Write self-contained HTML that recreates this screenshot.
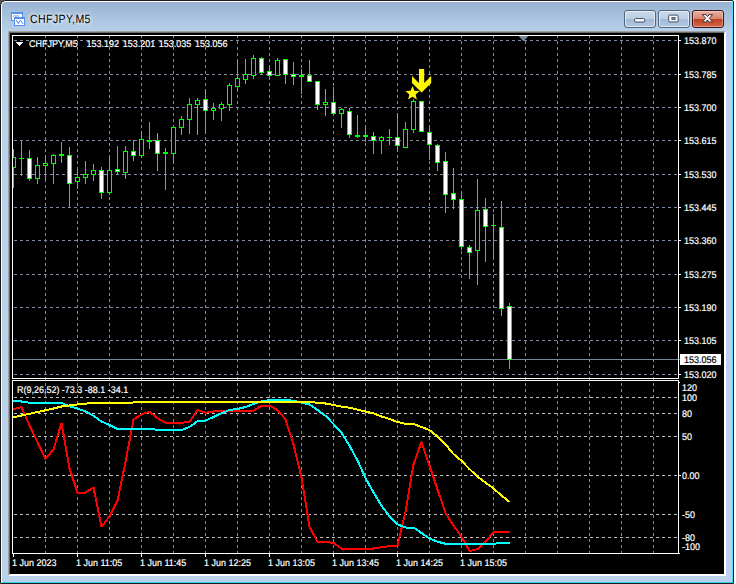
<!DOCTYPE html>
<html><head><meta charset="utf-8"><title>CHFJPY,M5</title>
<style>
html,body{margin:0;padding:0;background:#fff;}
body{width:736px;height:584px;position:relative;overflow:hidden;font-family:"Liberation Sans",sans-serif;}
#win{position:absolute;left:0;top:0;width:734px;height:584px;box-sizing:border-box;border:1px solid #1c1c1c;border-radius:6px 2px 0 0;background:#b9d1ea;overflow:hidden;}
#corner{position:absolute;left:0;top:0;width:8px;height:8px;background:#555;}
#hl{position:absolute;left:0;top:0;width:732px;height:582px;box-sizing:border-box;border-top:1px solid #fff;border-left:1px solid #fff;border-right:1px solid #5ad8ff;border-bottom:1px solid #35d0f0;border-radius:5px 1px 0 0;background:linear-gradient(#98b4d2 0px,#b9d1ea 30px,#b9d1ea 100%);}
#client{position:absolute;left:8px;top:31px;width:718px;height:545px;box-sizing:border-box;border:1px solid;border-color:#a0a0a0 #fff #fff #a0a0a0;background:#000;}
#client i{position:absolute;left:0;top:0;right:0;bottom:0;border:1px solid;border-color:#696969 #fff #fff #696969;}
#title{position:absolute;left:29.5px;top:10.8px;font-size:12px;line-height:16px;color:#000;letter-spacing:0.45px;transform:scaleX(.88);transform-origin:0 0;text-rendering:geometricPrecision;text-shadow:0 0 4px #fff,0 0 6px #fff;}
svg{position:absolute;left:0;top:0;}
.t{position:absolute;font-size:9.6px;line-height:11px;white-space:nowrap;text-rendering:geometricPrecision;-webkit-text-stroke:0.2px currentColor;transform:scaleX(.935);transform-origin:0 0;}
.btn{position:absolute;top:10px;height:18px;width:32px;box-sizing:border-box;border:1px solid #52657f;border-radius:3px;box-shadow:inset 0 0 0 1px rgba(255,255,255,.6);background:linear-gradient(#c9d9ea 0,#bccfe4 48%,#a3bbd6 52%,#b2c8e0 100%);}
#bclose{border-color:#43141a;background:linear-gradient(#e9b0a2 0,#d98571 48%,#c13f21 52%,#d4694b 100%);box-shadow:inset 0 0 0 1px rgba(255,255,255,.35);}
</style></head><body>
<div id="corner"></div>
<div id="win"><div id="hl"></div></div>
<svg width="20" height="20" style="left:8px;top:9px" viewBox="8 9 20 20" shape-rendering="crispEdges">
<rect x="11" y="12" width="12" height="9" fill="#5890f0"/><rect x="12" y="14" width="10" height="6" fill="#fff"/>
<polyline points="13,16.5 14.5,15.5 16,16.5 17.5,15.5 19,16.5" fill="none" stroke="#5890f0" stroke-width="1" shape-rendering="auto"/>
<rect x="14" y="17" width="11" height="9" fill="#5890f0"/><rect x="15" y="19" width="9" height="6" fill="#fff"/>
<polyline points="16.2,20 18.3,23.6 20,20.4 21.4,21.2 23,24" fill="none" stroke="#4a86ff" stroke-width="1" shape-rendering="auto"/>
</svg>
<div id="title">CHFJPY,M5</div>
<div class="btn" style="left:624px"><svg width="30" height="16" viewBox="0 0 30 16"><rect x="9.6" y="7.6" width="10" height="3.4" rx="1" fill="#fff" stroke="#3d4a5c"/></svg></div>
<div class="btn" style="left:658px"><svg width="30" height="16" viewBox="0 0 30 16"><rect x="9.7" y="4.1" width="9.4" height="6.8" rx="1" fill="#fff" stroke="#3d4a5c"/><rect x="12.9" y="6.6" width="3.2" height="1.9" fill="#8ea3bd" stroke="#3d4a5c" stroke-width=".9"/></svg></div>
<div class="btn" id="bclose" style="left:692px"><svg width="30" height="16" viewBox="0 0 30 16"><path d="M9.4 3.6 L12.8 3.6 L14.5 5.6 L16.2 3.6 L19.6 3.6 L16.3 7.3 L19.6 11 L16.2 11 L14.5 9 L12.8 11 L9.4 11 L12.7 7.3 Z" fill="#fff" stroke="#3f3038" stroke-width="1" stroke-linejoin="round"/></svg></div>
<div id="client"><i></i></div>
<svg width="736" height="584" viewBox="0 0 736 584" shape-rendering="crispEdges">
<line x1="45.5" y1="36" x2="45.5" y2="553" stroke="#7e8ea0" stroke-dasharray="3 3" stroke-dashoffset="1"/>
<line x1="77.5" y1="36" x2="77.5" y2="553" stroke="#7e8ea0" stroke-dasharray="3 3" stroke-dashoffset="1"/>
<line x1="109.5" y1="36" x2="109.5" y2="553" stroke="#7e8ea0" stroke-dasharray="3 3" stroke-dashoffset="1"/>
<line x1="141.5" y1="36" x2="141.5" y2="553" stroke="#7e8ea0" stroke-dasharray="3 3" stroke-dashoffset="1"/>
<line x1="173.5" y1="36" x2="173.5" y2="553" stroke="#7e8ea0" stroke-dasharray="3 3" stroke-dashoffset="1"/>
<line x1="205.5" y1="36" x2="205.5" y2="553" stroke="#7e8ea0" stroke-dasharray="3 3" stroke-dashoffset="1"/>
<line x1="237.5" y1="36" x2="237.5" y2="553" stroke="#7e8ea0" stroke-dasharray="3 3" stroke-dashoffset="1"/>
<line x1="269.5" y1="36" x2="269.5" y2="553" stroke="#7e8ea0" stroke-dasharray="3 3" stroke-dashoffset="1"/>
<line x1="301.5" y1="36" x2="301.5" y2="553" stroke="#7e8ea0" stroke-dasharray="3 3" stroke-dashoffset="1"/>
<line x1="333.5" y1="36" x2="333.5" y2="553" stroke="#7e8ea0" stroke-dasharray="3 3" stroke-dashoffset="1"/>
<line x1="365.5" y1="36" x2="365.5" y2="553" stroke="#7e8ea0" stroke-dasharray="3 3" stroke-dashoffset="1"/>
<line x1="397.5" y1="36" x2="397.5" y2="553" stroke="#7e8ea0" stroke-dasharray="3 3" stroke-dashoffset="1"/>
<line x1="429.5" y1="36" x2="429.5" y2="553" stroke="#7e8ea0" stroke-dasharray="3 3" stroke-dashoffset="1"/>
<line x1="461.5" y1="36" x2="461.5" y2="553" stroke="#7e8ea0" stroke-dasharray="3 3" stroke-dashoffset="1"/>
<line x1="493.5" y1="36" x2="493.5" y2="553" stroke="#7e8ea0" stroke-dasharray="3 3" stroke-dashoffset="1"/>
<line x1="525.5" y1="36" x2="525.5" y2="553" stroke="#7e8ea0" stroke-dasharray="3 3" stroke-dashoffset="1"/>
<line x1="557.5" y1="36" x2="557.5" y2="553" stroke="#7e8ea0" stroke-dasharray="3 3" stroke-dashoffset="1"/>
<line x1="589.5" y1="36" x2="589.5" y2="553" stroke="#7e8ea0" stroke-dasharray="3 3" stroke-dashoffset="1"/>
<line x1="621.5" y1="36" x2="621.5" y2="553" stroke="#7e8ea0" stroke-dasharray="3 3" stroke-dashoffset="1"/>
<line x1="653.5" y1="36" x2="653.5" y2="553" stroke="#7e8ea0" stroke-dasharray="3 3" stroke-dashoffset="1"/>
<line x1="13" y1="40.5" x2="678" y2="40.5" stroke="#7e8ea0" stroke-dasharray="3 3" stroke-dashoffset="5"/>
<line x1="13" y1="74.5" x2="678" y2="74.5" stroke="#7e8ea0" stroke-dasharray="3 3" stroke-dashoffset="5"/>
<line x1="13" y1="107.5" x2="678" y2="107.5" stroke="#7e8ea0" stroke-dasharray="3 3" stroke-dashoffset="5"/>
<line x1="13" y1="140.5" x2="678" y2="140.5" stroke="#7e8ea0" stroke-dasharray="3 3" stroke-dashoffset="5"/>
<line x1="13" y1="174.5" x2="678" y2="174.5" stroke="#7e8ea0" stroke-dasharray="3 3" stroke-dashoffset="5"/>
<line x1="13" y1="207.5" x2="678" y2="207.5" stroke="#7e8ea0" stroke-dasharray="3 3" stroke-dashoffset="5"/>
<line x1="13" y1="240.5" x2="678" y2="240.5" stroke="#7e8ea0" stroke-dasharray="3 3" stroke-dashoffset="5"/>
<line x1="13" y1="274.5" x2="678" y2="274.5" stroke="#7e8ea0" stroke-dasharray="3 3" stroke-dashoffset="5"/>
<line x1="13" y1="307.5" x2="678" y2="307.5" stroke="#7e8ea0" stroke-dasharray="3 3" stroke-dashoffset="5"/>
<line x1="13" y1="340.5" x2="678" y2="340.5" stroke="#7e8ea0" stroke-dasharray="3 3" stroke-dashoffset="5"/>
<line x1="13" y1="374.5" x2="678" y2="374.5" stroke="#7e8ea0" stroke-dasharray="3 3" stroke-dashoffset="5"/>
<line x1="13" y1="397.5" x2="678" y2="397.5" stroke="#c0c0c0" stroke-dasharray="3 3" stroke-dashoffset="5"/>
<line x1="13" y1="413.5" x2="678" y2="413.5" stroke="#c0c0c0" stroke-dasharray="3 3" stroke-dashoffset="5"/>
<line x1="13" y1="436.5" x2="678" y2="436.5" stroke="#c0c0c0" stroke-dasharray="3 3" stroke-dashoffset="5"/>
<line x1="13" y1="475.5" x2="678" y2="475.5" stroke="#c0c0c0" stroke-dasharray="3 3" stroke-dashoffset="5"/>
<line x1="13" y1="514.5" x2="678" y2="514.5" stroke="#c0c0c0" stroke-dasharray="3 3" stroke-dashoffset="5"/>
<line x1="13" y1="537.5" x2="678" y2="537.5" stroke="#c0c0c0" stroke-dasharray="3 3" stroke-dashoffset="5"/>
<rect x="13" y="359" width="667" height="1" fill="#778899"/>
<rect x="13" y="149" width="1" height="39" fill="#00ff00"/>
<rect x="12" y="157" width="4" height="11" fill="#00ff00"/>
<rect x="13" y="158" width="2" height="9" fill="#000"/>
<rect x="21" y="141" width="1" height="35" fill="#00ff00"/>
<rect x="19" y="158" width="5" height="1" fill="#00ff00"/>
<rect x="29" y="150" width="1" height="31" fill="#00ff00"/>
<rect x="27" y="158" width="5" height="21" fill="#00ff00"/>
<rect x="28" y="159" width="3" height="19" fill="#fff"/>
<rect x="37" y="157" width="1" height="27" fill="#00ff00"/>
<rect x="35" y="165" width="5" height="14" fill="#00ff00"/>
<rect x="36" y="166" width="3" height="12" fill="#000"/>
<rect x="45" y="155" width="1" height="25" fill="#00ff00"/>
<rect x="43" y="163" width="5" height="3" fill="#00ff00"/>
<rect x="44" y="164" width="3" height="1" fill="#000"/>
<rect x="53" y="154" width="1" height="30" fill="#00ff00"/>
<rect x="51" y="155" width="5" height="9" fill="#00ff00"/>
<rect x="52" y="156" width="3" height="7" fill="#000"/>
<rect x="61" y="142" width="1" height="21" fill="#00ff00"/>
<rect x="59" y="154" width="5" height="2" fill="#00ff00"/>
<rect x="69" y="147" width="1" height="60" fill="#00ff00"/>
<rect x="67" y="155" width="5" height="29" fill="#00ff00"/>
<rect x="68" y="156" width="3" height="27" fill="#fff"/>
<rect x="77" y="167" width="1" height="22" fill="#00ff00"/>
<rect x="75" y="177" width="5" height="5" fill="#00ff00"/>
<rect x="76" y="178" width="3" height="3" fill="#000"/>
<rect x="85" y="161" width="1" height="23" fill="#00ff00"/>
<rect x="83" y="174" width="5" height="4" fill="#00ff00"/>
<rect x="84" y="175" width="3" height="2" fill="#000"/>
<rect x="93" y="164" width="1" height="17" fill="#00ff00"/>
<rect x="91" y="170" width="5" height="5" fill="#00ff00"/>
<rect x="92" y="171" width="3" height="3" fill="#000"/>
<rect x="101" y="167" width="1" height="32" fill="#00ff00"/>
<rect x="99" y="170" width="5" height="23" fill="#00ff00"/>
<rect x="100" y="171" width="3" height="21" fill="#fff"/>
<rect x="109" y="157" width="1" height="38" fill="#00ff00"/>
<rect x="107" y="170" width="5" height="23" fill="#00ff00"/>
<rect x="108" y="171" width="3" height="21" fill="#000"/>
<rect x="117" y="146" width="1" height="29" fill="#00ff00"/>
<rect x="115" y="169" width="5" height="3" fill="#00ff00"/>
<rect x="116" y="170" width="3" height="1" fill="#fff"/>
<rect x="125" y="146" width="1" height="33" fill="#00ff00"/>
<rect x="123" y="151" width="5" height="22" fill="#00ff00"/>
<rect x="124" y="152" width="3" height="20" fill="#000"/>
<rect x="133" y="140" width="1" height="21" fill="#00ff00"/>
<rect x="131" y="151" width="5" height="5" fill="#00ff00"/>
<rect x="132" y="152" width="3" height="3" fill="#fff"/>
<rect x="141" y="131" width="1" height="27" fill="#00ff00"/>
<rect x="139" y="139" width="5" height="17" fill="#00ff00"/>
<rect x="140" y="140" width="3" height="15" fill="#000"/>
<rect x="149" y="122" width="1" height="27" fill="#00ff00"/>
<rect x="147" y="140" width="5" height="2" fill="#00ff00"/>
<rect x="157" y="133" width="1" height="38" fill="#00ff00"/>
<rect x="155" y="140" width="5" height="14" fill="#00ff00"/>
<rect x="156" y="141" width="3" height="12" fill="#fff"/>
<rect x="165" y="148" width="1" height="42" fill="#00ff00"/>
<rect x="163" y="152" width="5" height="2" fill="#00ff00"/>
<rect x="173" y="127" width="1" height="37" fill="#00ff00"/>
<rect x="171" y="127" width="5" height="27" fill="#00ff00"/>
<rect x="172" y="128" width="3" height="25" fill="#000"/>
<rect x="181" y="116" width="1" height="19" fill="#00ff00"/>
<rect x="179" y="119" width="5" height="9" fill="#00ff00"/>
<rect x="180" y="120" width="3" height="7" fill="#000"/>
<rect x="189" y="98" width="1" height="36" fill="#00ff00"/>
<rect x="187" y="104" width="5" height="16" fill="#00ff00"/>
<rect x="188" y="105" width="3" height="14" fill="#000"/>
<rect x="197" y="98" width="1" height="37" fill="#00ff00"/>
<rect x="195" y="100" width="5" height="5" fill="#00ff00"/>
<rect x="196" y="101" width="3" height="3" fill="#000"/>
<rect x="205" y="89" width="1" height="45" fill="#00ff00"/>
<rect x="203" y="99" width="5" height="12" fill="#00ff00"/>
<rect x="204" y="100" width="3" height="10" fill="#fff"/>
<rect x="213" y="103" width="1" height="17" fill="#00ff00"/>
<rect x="211" y="108" width="5" height="3" fill="#00ff00"/>
<rect x="212" y="109" width="3" height="1" fill="#000"/>
<rect x="221" y="102" width="1" height="19" fill="#00ff00"/>
<rect x="219" y="104" width="5" height="5" fill="#00ff00"/>
<rect x="220" y="105" width="3" height="3" fill="#000"/>
<rect x="229" y="83" width="1" height="28" fill="#00ff00"/>
<rect x="227" y="85" width="5" height="20" fill="#00ff00"/>
<rect x="228" y="86" width="3" height="18" fill="#000"/>
<rect x="237" y="60" width="1" height="30" fill="#00ff00"/>
<rect x="235" y="78" width="5" height="9" fill="#00ff00"/>
<rect x="236" y="79" width="3" height="7" fill="#000"/>
<rect x="245" y="59" width="1" height="25" fill="#00ff00"/>
<rect x="243" y="74" width="5" height="6" fill="#00ff00"/>
<rect x="244" y="75" width="3" height="4" fill="#000"/>
<rect x="253" y="55" width="1" height="24" fill="#00ff00"/>
<rect x="251" y="58" width="5" height="18" fill="#00ff00"/>
<rect x="252" y="59" width="3" height="16" fill="#000"/>
<rect x="261" y="57" width="1" height="17" fill="#00ff00"/>
<rect x="259" y="58" width="5" height="15" fill="#00ff00"/>
<rect x="260" y="59" width="3" height="13" fill="#fff"/>
<rect x="269" y="65" width="1" height="15" fill="#00ff00"/>
<rect x="267" y="71" width="5" height="5" fill="#00ff00"/>
<rect x="268" y="72" width="3" height="3" fill="#fff"/>
<rect x="277" y="58" width="1" height="18" fill="#00ff00"/>
<rect x="275" y="60" width="5" height="16" fill="#00ff00"/>
<rect x="276" y="61" width="3" height="14" fill="#000"/>
<rect x="285" y="59" width="1" height="25" fill="#00ff00"/>
<rect x="283" y="59" width="5" height="16" fill="#00ff00"/>
<rect x="284" y="60" width="3" height="14" fill="#fff"/>
<rect x="293" y="62" width="1" height="23" fill="#00ff00"/>
<rect x="291" y="74" width="5" height="3" fill="#00ff00"/>
<rect x="292" y="75" width="3" height="1" fill="#fff"/>
<rect x="301" y="69" width="1" height="25" fill="#00ff00"/>
<rect x="299" y="75" width="5" height="2" fill="#00ff00"/>
<rect x="309" y="60" width="1" height="22" fill="#00ff00"/>
<rect x="307" y="75" width="5" height="7" fill="#00ff00"/>
<rect x="308" y="76" width="3" height="5" fill="#fff"/>
<rect x="317" y="81" width="1" height="29" fill="#00ff00"/>
<rect x="315" y="81" width="5" height="24" fill="#00ff00"/>
<rect x="316" y="82" width="3" height="22" fill="#fff"/>
<rect x="325" y="89" width="1" height="27" fill="#00ff00"/>
<rect x="323" y="102" width="5" height="3" fill="#00ff00"/>
<rect x="324" y="103" width="3" height="1" fill="#000"/>
<rect x="333" y="87" width="1" height="28" fill="#00ff00"/>
<rect x="331" y="102" width="5" height="12" fill="#00ff00"/>
<rect x="332" y="103" width="3" height="10" fill="#fff"/>
<rect x="341" y="108" width="1" height="20" fill="#00ff00"/>
<rect x="339" y="109" width="5" height="5" fill="#00ff00"/>
<rect x="340" y="110" width="3" height="3" fill="#000"/>
<rect x="349" y="108" width="1" height="30" fill="#00ff00"/>
<rect x="347" y="111" width="5" height="24" fill="#00ff00"/>
<rect x="348" y="112" width="3" height="22" fill="#fff"/>
<rect x="357" y="115" width="1" height="23" fill="#00ff00"/>
<rect x="355" y="135" width="5" height="2" fill="#00ff00"/>
<rect x="365" y="125" width="1" height="17" fill="#00ff00"/>
<rect x="363" y="135" width="5" height="2" fill="#00ff00"/>
<rect x="373" y="132" width="1" height="22" fill="#00ff00"/>
<rect x="371" y="136" width="5" height="5" fill="#00ff00"/>
<rect x="372" y="137" width="3" height="3" fill="#fff"/>
<rect x="381" y="136" width="1" height="18" fill="#00ff00"/>
<rect x="379" y="137" width="5" height="4" fill="#00ff00"/>
<rect x="380" y="138" width="3" height="2" fill="#000"/>
<rect x="389" y="129" width="1" height="16" fill="#00ff00"/>
<rect x="387" y="137" width="5" height="1" fill="#00ff00"/>
<rect x="397" y="113" width="1" height="37" fill="#00ff00"/>
<rect x="395" y="137" width="5" height="9" fill="#00ff00"/>
<rect x="396" y="138" width="3" height="7" fill="#fff"/>
<rect x="405" y="122" width="1" height="26" fill="#00ff00"/>
<rect x="403" y="129" width="5" height="19" fill="#00ff00"/>
<rect x="404" y="130" width="3" height="17" fill="#000"/>
<rect x="413" y="99" width="1" height="34" fill="#00ff00"/>
<rect x="411" y="101" width="5" height="29" fill="#00ff00"/>
<rect x="412" y="102" width="3" height="27" fill="#000"/>
<rect x="421" y="101" width="1" height="31" fill="#00ff00"/>
<rect x="419" y="101" width="5" height="31" fill="#00ff00"/>
<rect x="420" y="102" width="3" height="29" fill="#fff"/>
<rect x="429" y="125" width="1" height="35" fill="#00ff00"/>
<rect x="427" y="132" width="5" height="13" fill="#00ff00"/>
<rect x="428" y="133" width="3" height="11" fill="#fff"/>
<rect x="437" y="144" width="1" height="27" fill="#00ff00"/>
<rect x="435" y="145" width="5" height="18" fill="#00ff00"/>
<rect x="436" y="146" width="3" height="16" fill="#fff"/>
<rect x="445" y="152" width="1" height="61" fill="#00ff00"/>
<rect x="443" y="161" width="5" height="34" fill="#00ff00"/>
<rect x="444" y="162" width="3" height="32" fill="#fff"/>
<rect x="453" y="168" width="1" height="41" fill="#00ff00"/>
<rect x="451" y="193" width="5" height="7" fill="#00ff00"/>
<rect x="452" y="194" width="3" height="5" fill="#fff"/>
<rect x="461" y="194" width="1" height="56" fill="#00ff00"/>
<rect x="459" y="199" width="5" height="48" fill="#00ff00"/>
<rect x="460" y="200" width="3" height="46" fill="#fff"/>
<rect x="469" y="245" width="1" height="34" fill="#00ff00"/>
<rect x="467" y="247" width="5" height="6" fill="#00ff00"/>
<rect x="468" y="248" width="3" height="4" fill="#fff"/>
<rect x="477" y="179" width="1" height="106" fill="#00ff00"/>
<rect x="475" y="210" width="5" height="41" fill="#00ff00"/>
<rect x="476" y="211" width="3" height="39" fill="#000"/>
<rect x="485" y="198" width="1" height="64" fill="#00ff00"/>
<rect x="483" y="209" width="5" height="18" fill="#00ff00"/>
<rect x="484" y="210" width="3" height="16" fill="#fff"/>
<rect x="493" y="214" width="1" height="43" fill="#00ff00"/>
<rect x="491" y="225" width="5" height="1" fill="#00ff00"/>
<rect x="501" y="201" width="1" height="115" fill="#00ff00"/>
<rect x="499" y="227" width="5" height="82" fill="#00ff00"/>
<rect x="500" y="228" width="3" height="80" fill="#fff"/>
<rect x="509" y="303" width="1" height="66" fill="#00ff00"/>
<rect x="507" y="306" width="5" height="54" fill="#00ff00"/>
<rect x="508" y="307" width="3" height="52" fill="#fff"/>
<polyline points="12.6,409.00 13.5,409.00 21.5,407.20 29.5,425.30 37.5,442.20 45.5,459.00 53.5,449.50 61.5,423.00 69.5,468.50 77.5,492.50 85.5,492.50 93.5,487.50 101.5,526.75 109.5,516.50 117.5,500.50 125.5,462.00 133.5,419.50 141.5,414.50 149.5,411.50 157.5,418.30 165.5,422.75 173.5,423.00 181.5,422.75 189.5,422.00 197.5,410.00 205.5,412.75 213.5,411.50 221.5,410.75 229.5,410.75 237.5,410.75 245.5,410.75 253.5,410.75 261.5,405.75 269.5,405.75 277.5,410.00 285.5,419.50 293.5,444.40 301.5,477.50 309.5,526.75 317.5,541.75 325.5,541.75 333.5,543.00 341.5,548.50 349.5,548.50 357.5,548.50 365.5,548.50 373.5,548.50 381.5,547.25 389.5,546.25 397.5,545.50 405.5,511.75 413.5,464.40 421.5,441.80 429.5,465.60 437.5,489.40 445.5,513.00 453.5,525.50 461.5,536.75 469.5,551.00 477.5,549.25 485.5,541.75 493.5,532.25 501.5,531.75 509.5,531.75" fill="none" stroke="#ff0000" stroke-width="2" stroke-linejoin="bevel"/>
<polyline points="12.6,401.00 13.5,401.00 21.5,401.50 29.5,402.75 37.5,403.00 45.5,403.00 53.5,403.00 61.5,403.00 69.5,406.25 77.5,408.50 85.5,411.50 93.5,415.75 101.5,421.50 109.5,425.00 117.5,429.00 125.5,429.00 133.5,429.00 141.5,429.00 149.5,429.00 157.5,429.70 165.5,430.00 173.5,430.00 181.5,430.00 189.5,427.00 197.5,421.25 205.5,420.75 213.5,417.00 221.5,413.25 229.5,410.00 237.5,409.00 245.5,407.00 253.5,404.00 261.5,401.50 269.5,400.00 277.5,400.00 285.5,400.00 293.5,400.75 301.5,402.50 309.5,404.50 317.5,410.00 325.5,415.75 333.5,424.00 341.5,432.75 349.5,445.60 357.5,460.50 365.5,478.00 373.5,492.50 381.5,505.50 389.5,516.50 397.5,524.25 405.5,527.50 413.5,527.50 421.5,533.00 429.5,538.50 437.5,541.75 445.5,543.75 453.5,543.75 461.5,543.75 469.5,543.75 477.5,543.75 485.5,543.75 493.5,543.75 501.5,543.00 509.5,543.00" fill="none" stroke="#00ffff" stroke-width="2" stroke-linejoin="bevel"/>
<polyline points="12.6,417.20 13.5,417.20 21.5,415.50 29.5,413.80 37.5,412.00 45.5,410.30 53.5,408.50 61.5,406.50 69.5,405.50 77.5,404.50 85.5,403.60 93.5,403.00 101.5,403.00 109.5,403.00 117.5,403.00 125.5,403.00 133.5,402.50 141.5,402.00 149.5,402.00 157.5,402.00 165.5,402.00 173.5,402.00 181.5,402.00 189.5,402.00 197.5,402.00 205.5,402.00 213.5,402.00 221.5,402.00 229.5,402.00 237.5,402.00 245.5,402.00 253.5,402.00 261.5,402.00 269.5,402.00 277.5,402.00 285.5,402.00 293.5,402.00 301.5,402.00 309.5,402.00 317.5,402.70 325.5,403.50 333.5,405.00 341.5,406.60 349.5,407.75 357.5,409.60 365.5,411.50 373.5,413.25 381.5,416.50 389.5,419.00 397.5,422.00 405.5,423.75 413.5,424.00 421.5,427.00 429.5,430.00 437.5,436.50 445.5,444.40 453.5,454.10 461.5,460.75 469.5,469.10 477.5,476.50 485.5,482.75 493.5,488.40 501.5,495.60 509.5,501.80" fill="none" stroke="#ffff00" stroke-width="2" stroke-linejoin="bevel"/>
<rect x="12" y="35" width="667" height="1" fill="#fff"/>
<rect x="12" y="378" width="667" height="1" fill="#fff"/>
<rect x="12" y="35" width="1" height="344" fill="#fff"/>
<rect x="678" y="35" width="1" height="344" fill="#fff"/>
<rect x="12" y="380" width="667" height="1" fill="#fff"/>
<rect x="12" y="553" width="667" height="1" fill="#fff"/>
<rect x="12" y="380" width="1" height="174" fill="#fff"/>
<rect x="678" y="380" width="1" height="174" fill="#fff"/>
<rect x="679" y="40" width="2" height="1" fill="#fff"/>
<rect x="679" y="74" width="2" height="1" fill="#fff"/>
<rect x="679" y="107" width="2" height="1" fill="#fff"/>
<rect x="679" y="140" width="2" height="1" fill="#fff"/>
<rect x="679" y="174" width="2" height="1" fill="#fff"/>
<rect x="679" y="207" width="2" height="1" fill="#fff"/>
<rect x="679" y="240" width="2" height="1" fill="#fff"/>
<rect x="679" y="274" width="2" height="1" fill="#fff"/>
<rect x="679" y="307" width="2" height="1" fill="#fff"/>
<rect x="679" y="340" width="2" height="1" fill="#fff"/>
<rect x="679" y="374" width="2" height="1" fill="#fff"/>
<rect x="679" y="382" width="1" height="1" fill="#fff"/>
<rect x="679" y="553" width="1" height="1" fill="#fff"/>
<rect x="679" y="475" width="2" height="1" fill="#fff"/>
<rect x="13" y="554" width="1" height="3" fill="#fff"/>
<rect x="77" y="554" width="1" height="3" fill="#fff"/>
<rect x="141" y="554" width="1" height="3" fill="#fff"/>
<rect x="205" y="554" width="1" height="3" fill="#fff"/>
<rect x="269" y="554" width="1" height="3" fill="#fff"/>
<rect x="333" y="554" width="1" height="3" fill="#fff"/>
<rect x="397" y="554" width="1" height="3" fill="#fff"/>
<rect x="461" y="554" width="1" height="3" fill="#fff"/>
<polygon points="518.6,36 528.4,36 523.5,41.2" fill="#778899" shape-rendering="geometricPrecision"/>
<polygon points="15.5,42 23,42 19.25,46" fill="#fff"/>
<polygon shape-rendering="geometricPrecision" points="419,69 424.2,69 424.2,83 431.2,76 431.2,83 421.6,92.6 412,83 412,76 419,83" fill="#fff800"/>
<polygon shape-rendering="geometricPrecision" points="412.50,85.90 414.44,90.73 419.63,91.08 415.64,94.42 416.91,99.47 412.50,96.70 408.09,99.47 409.36,94.42 405.37,91.08 410.56,90.73" fill="#fff800"/>
<rect x="680" y="354" width="41" height="11" fill="#fff"/>
</svg>
<div class="t" style="left:684.1px;top:36px;color:#fff;">153.870</div><div class="t" style="left:684.1px;top:70px;color:#fff;">153.785</div><div class="t" style="left:684.1px;top:103px;color:#fff;">153.700</div><div class="t" style="left:684.1px;top:136px;color:#fff;">153.615</div><div class="t" style="left:684.1px;top:170px;color:#fff;">153.530</div><div class="t" style="left:684.1px;top:203px;color:#fff;">153.445</div><div class="t" style="left:684.1px;top:236px;color:#fff;">153.360</div><div class="t" style="left:684.1px;top:270px;color:#fff;">153.275</div><div class="t" style="left:684.1px;top:303px;color:#fff;">153.190</div><div class="t" style="left:684.1px;top:336px;color:#fff;">153.105</div><div class="t" style="left:684.1px;top:370px;color:#fff;">153.020</div><div class="t" style="left:684.1px;top:355px;color:#000;">153.056</div><div class="t" style="left:682.3000000000001px;top:383px;color:#fff;">120</div><div class="t" style="left:681.7px;top:393px;color:#fff;">100</div><div class="t" style="left:681.7px;top:409px;color:#fff;">80</div><div class="t" style="left:681.7px;top:432px;color:#fff;">50</div><div class="t" style="left:681.7px;top:471px;color:#fff;">0.00</div><div class="t" style="left:681.7px;top:510px;color:#fff;">-50</div><div class="t" style="left:681.7px;top:533px;color:#fff;">-80</div><div class="t" style="left:682.3000000000001px;top:542px;color:#fff;">-100</div><div class="t" style="left:11.8px;top:558px;color:#fff;">1 Jun 2023</div><div class="t" style="left:75.8px;top:558px;color:#fff;">1 Jun 11:05</div><div class="t" style="left:139.8px;top:558px;color:#fff;">1 Jun 11:45</div><div class="t" style="left:203.8px;top:558px;color:#fff;">1 Jun 12:25</div><div class="t" style="left:267.8px;top:558px;color:#fff;">1 Jun 13:05</div><div class="t" style="left:331.8px;top:558px;color:#fff;">1 Jun 13:45</div><div class="t" style="left:395.8px;top:558px;color:#fff;">1 Jun 14:25</div><div class="t" style="left:459.8px;top:558px;color:#fff;">1 Jun 15:05</div><div class="t" style="left:28.5px;top:39px;color:#fff;white-space:pre;word-spacing:1.3px">CHFJPY,M5&nbsp;&nbsp;<span style="margin-left:1.6px">153.192 153.201 153.035 153.056</span></div><div class="t" style="left:16.9px;top:385px;color:#fff;">R(9,26,52) -73.3 -88.1 -34.1</div>
</body></html>
